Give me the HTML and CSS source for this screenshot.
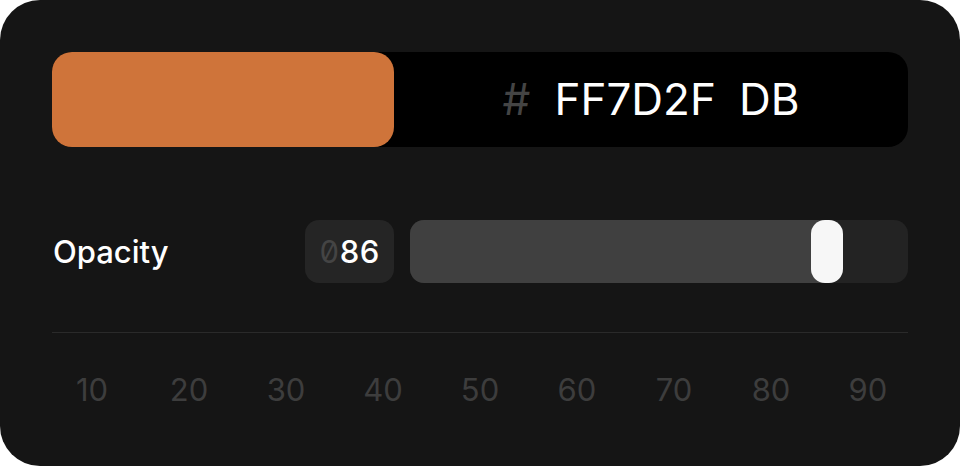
FILE: index.html
```html
<!DOCTYPE html>
<html lang="en">
<head>
<meta charset="utf-8">
<title>Color picker</title>
<link rel="stylesheet" href="styles.css">
</head>
<body>
<div class="card">
  <div class="color-field">
    <div class="swatch"></div>
    <div class="hex">
      <span class="hash">#</span>
      <span class="hex-value">FF7D2F</span>
      <span class="hex-alpha">DB</span>
    </div>
  </div>
  <div class="opacity-row">
    <div class="label">Opacity</div>
    <div class="num"><span class="lead">0</span>86</div>
    <div class="track">
      <div class="fill" style="width: 417px"></div>
      <div class="thumb" style="left: 401px"></div>
    </div>
  </div>
  <div class="divider"></div>
  <div class="ticks">
    <span>10</span><span>20</span><span>30</span><span>40</span><span>50</span><span>60</span><span>70</span><span>80</span><span>90</span>
  </div>
</div>
</body>
</html>
```
FILE: styles.css
```css
html, body {
  margin: 0;
  padding: 0;
  background: #ffffff;
}
body {
  width: 960px;
  height: 466px;
  font-family: Inter, "Noto Sans", sans-serif;
}
.card {
  box-sizing: border-box;
  width: 960px;
  height: 466px;
  background: #151515;
  border-radius: 40px;
  padding: 52px 52px 0 52px;
  display: flex;
  flex-direction: column;
}
.color-field {
  height: 95px;
  background: #000000;
  border-radius: 20px;
  display: flex;
}
.swatch {
  width: 342px;
  background: #cf743a;
  border-radius: 20px;
}
.hex {
  flex: 1;
  display: flex;
  align-items: center;
  justify-content: center;
  gap: 23px;
  font-size: 44px;
  color: #ffffff;
  padding-bottom: 1px;
}
.hash {
  color: #444444;
  margin-right: 1px;
}
.opacity-row {
  margin-top: 73px;
  height: 63px;
  display: flex;
  align-items: center;
}
.label {
  flex: 1;
  color: #ffffff;
  font-size: 31px;
  font-weight: 500;
  padding-left: 1px;
}
.num {
  width: 89px;
  height: 63px;
  background: #252525;
  border-radius: 14px;
  display: flex;
  align-items: center;
  justify-content: center;
  color: #ffffff;
  font-size: 31px;
  font-weight: 500;
  font-feature-settings: "zero" 1, "tnum" 1;
}
.lead {
  color: #444444;
  font-weight: 400;
}
.track {
  position: relative;
  width: 498px;
  height: 63px;
  margin-left: 16px;
  background: #232323;
  border-radius: 14px;
  overflow: hidden;
}
.fill {
  height: 100%;
  background: #404040;
}
.thumb {
  position: absolute;
  top: 0;
  width: 32px;
  height: 63px;
  background: #f7f7f7;
  border-radius: 14px;
}
.divider {
  margin-top: 49px;
  height: 1px;
  background: #2a2a2a;
}
.ticks {
  margin-top: 38px;
  display: grid;
  grid-template-columns: repeat(9, 97px);
  justify-content: center;
  font-size: 31px;
  color: #3d3d3d;
  text-align: center;
}
```
